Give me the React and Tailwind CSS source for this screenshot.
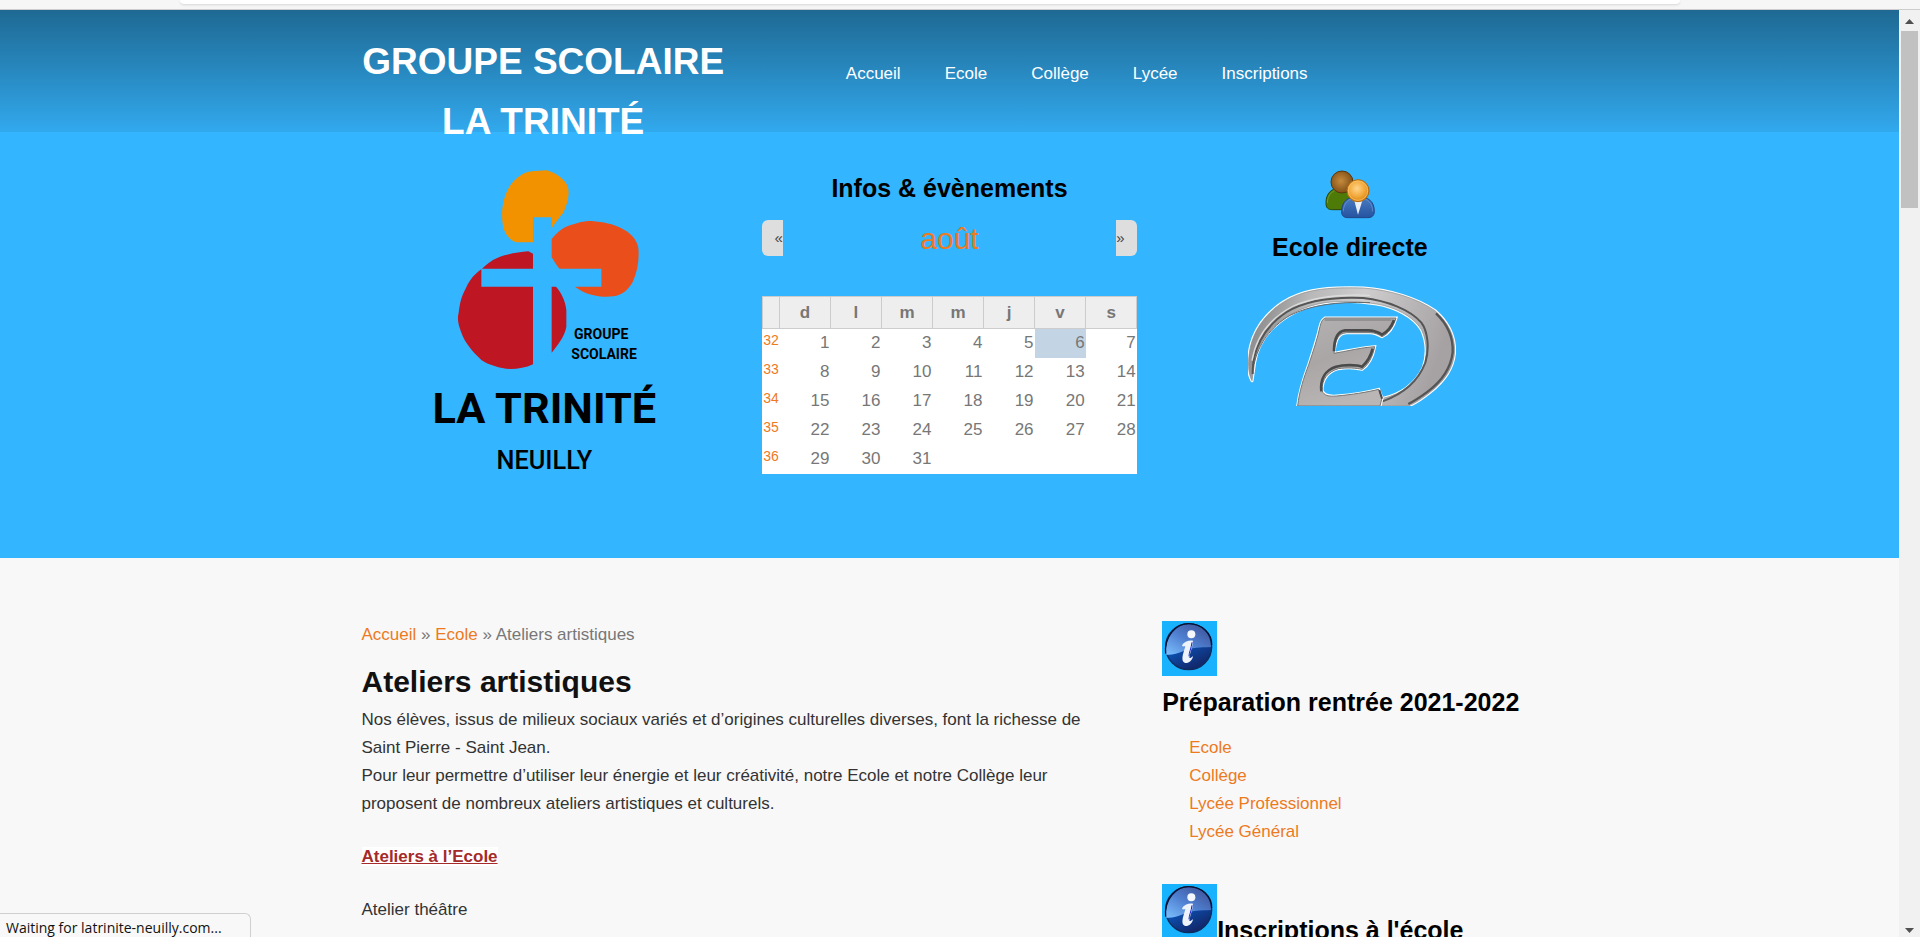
import React from "react";

const navItems = ["Accueil", "Ecole", "Collège", "Lycée", "Inscriptions"];
const weekDays = ["d", "l", "m", "m", "j", "v", "s"];
const weeks = [
  { number: 32, days: [1, 2, 3, 4, 5, 6, 7] },
  { number: 33, days: [8, 9, 10, 11, 12, 13, 14] },
  { number: 34, days: [15, 16, 17, 18, 19, 20, 21] },
  { number: 35, days: [22, 23, 24, 25, 26, 27, 28] },
  { number: 36, days: [29, 30, 31, null, null, null, null] },
];
const today = 6;
const prepLinks = ["Ecole", "Collège", "Lycée Professionnel", "Lycée Général"];

function SchoolLogo() {
  return (
    <svg width="225" height="301" viewBox="36 30 675 903" role="img" aria-label="Groupe scolaire La Trinité Neuilly">
      <path
        fill="#f39200"
        d="M290 247 C268 240 254 222 249 198 C242 160 247 112 272 74 C290 52 312 36 335 34 L380 31 C410 40 436 58 444 82 C450 110 440 135 430 158 C418 172 406 188 396 203 V172 H339 V247 Z"
      />
      <path
        fill="#ea4f1b"
        d="M395 237 C410 218 428 202 452 195 C475 188 490 183 515 183 C550 186 580 192 604 205 C630 218 650 236 655 264 C658 300 653 335 637 368 C622 392 606 404 580 409 C548 414 500 407 465 380 H544 V326 H418 C409 315 402 303 395 292 Z"
      />
      <path
        fill="#be1622"
        d="M186 326 C206 306 222 297 240 290 C262 282 295 277 325 274 L339 281 V326 Z M184 328 V380 H339 V613 C318 623 295 627 270 627 C240 625 205 615 184 600 C158 574 135 550 123 515 C115 495 111 475 116 458 C120 430 123 410 138 384 C150 358 164 342 184 328 Z M395 380 H408 C422 396 436 420 439 450 V500 C434 530 412 556 395 578 Z"
      />
      <g fill="#000" fontFamily="Roboto, 'Liberation Sans', sans-serif">
        <text x="462" y="538" fontSize="42" fontWeight="700">GROUPE</text>
        <text x="454" y="597" fontSize="42" fontWeight="700">SCOLAIRE</text>
        <text x="373" y="790" fontSize="130" fontWeight="700" textAnchor="middle">LA TRINITÉ</text>
        <text x="373" y="926" fontSize="76" fontWeight="500" textAnchor="middle">NEUILLY</text>
      </g>
    </svg>
  );
}

function PeopleIcon() {
  return (
    <svg width="50" height="50" viewBox="284 30 150 150" aria-hidden="true">
      <defs>
        <radialGradient id="headBrown" cx="45%" cy="45%" r="60%">
          <stop offset="0" stopColor="#c58a3e" />
          <stop offset="1" stopColor="#7a4a12" />
        </radialGradient>
        <radialGradient id="headGold" cx="45%" cy="40%" r="60%">
          <stop offset="0" stopColor="#ffd58a" />
          <stop offset="0.6" stopColor="#f2a93c" />
          <stop offset="1" stopColor="#d98612" />
        </radialGradient>
        <linearGradient id="suit" x1="0" y1="0" x2="0" y2="1">
          <stop offset="0" stopColor="#4a7cc2" />
          <stop offset="1" stopColor="#2553a0" />
        </linearGradient>
      </defs>
      <path d="M287 130 C286 100 305 82 335 82 C362 82 375 100 375 125 C375 142 366 149 350 149 H306 C292 149 287 142 287 130 Z" fill="#4e7a08" stroke="#2c4706" strokeWidth="3" />
      <path d="M291 129 C291 104 308 87 335 87" fill="none" stroke="#86a94c" strokeWidth="2" />
      <circle cx="335" cy="66" r="33" fill="url(#headBrown)" stroke="#5a3710" strokeWidth="3" />
      <path d="M334 155 C334 124 352 110 383 110 C414 110 432 124 432 155 C431 168 424 173 412 173 H354 C341 173 334 168 334 155 Z" fill="url(#suit)" stroke="#1f4686" strokeWidth="3" />
      <path d="M339 154 C339 130 356 116 370 115 M427 154 C427 130 410 116 396 115" fill="none" stroke="#6f9ad6" strokeWidth="2" />
      <path d="M372 122 L383 164 L396 122 Z" fill="#e8effa" />
      <circle cx="383" cy="92" r="33" fill="url(#headGold)" stroke="#b06a12" strokeWidth="3" />
      <circle cx="383" cy="92" r="29" fill="none" stroke="#ffc873" strokeWidth="2" />
    </svg>
  );
}

function EcoleDirecteLogo() {
  const swoosh =
    "M66 660 C54 640 52 600 62 555 C78 490 130 430 205 402 C260 382 320 380 400 382 C480 388 560 412 615 450 C655 485 674 525 674 570 C672 620 645 660 600 695 C575 715 555 728 535 736 H400 L455 714 C520 700 560 662 580 620 C592 588 592 545 575 508 C550 465 490 438 440 430 C390 422 330 420 285 426 C220 436 165 465 125 505 C95 535 78 575 74 605 Z";
  const letter =
    "M285 472 H498 C490 500 474 520 456 528 C446 522 436 516 420 516 H350 C325 518 316 535 312 578 C350 572 395 560 434 558 C428 590 414 614 396 626 C380 622 350 620 325 624 C292 634 276 655 276 690 C282 705 296 708 320 706 C365 702 410 695 446 686 L456 712 L450 736 H203 C208 690 222 650 236 612 C250 570 262 535 270 498 C273 484 277 476 285 472 Z";
  return (
    <svg width="208" height="120" viewBox="54 376 624 360" role="img" aria-label="Ecole directe">
      <defs>
        <linearGradient id="metal" x1="0" y1="0" x2="0.4" y2="1">
          <stop offset="0" stopColor="#b4b1b2" />
          <stop offset="0.5" stopColor="#aaa6a6" />
          <stop offset="1" stopColor="#bab6b6" />
        </linearGradient>
        <linearGradient id="ring" x1="0" y1="0" x2="1" y2="0.2">
          <stop offset="0" stopColor="#7a7a7a" />
          <stop offset="0.3" stopColor="#b9b8b9" />
          <stop offset="0.55" stopColor="#cfcdce" />
          <stop offset="1" stopColor="#a6a2a3" />
        </linearGradient>
      </defs>
      <path d={swoosh} fill="#fff" stroke="#fff" strokeWidth="9" strokeLinejoin="round" />
      <path d={swoosh} fill="url(#ring)" stroke="#8a8a8a" strokeWidth="2" />
      <path d="M68 640 C66 570 100 500 170 454 C230 418 310 408 400 412 C470 420 540 446 574 486 C592 510 600 560 586 606" fill="none" stroke="#555" strokeWidth="6" />
      <path d="M66 600 C78 530 120 472 190 436 C260 406 340 400 420 404" fill="none" stroke="#dcdcdc" strokeWidth="4" />
      <path d="M72 610 C86 550 120 500 180 464 C240 434 320 422 420 426" fill="none" stroke="#686868" strokeWidth="3" />
      <path d="M586 606 C565 660 520 700 458 722" fill="none" stroke="#5a5a5a" strokeWidth="6" />
      <path d="M618 458 C654 492 670 530 668 575 C662 625 634 662 594 692 C575 706 555 720 535 730" fill="none" stroke="#555" strokeWidth="7" />
      <path d={letter} fill="#fff" stroke="#fff" strokeWidth="9" />
      <path d={letter} fill="url(#metal)" stroke="#777" strokeWidth="3" />
      <path d="M492 478 C484 500 472 514 456 522 C444 514 430 509 415 509 H345 C322 512 312 535 312 572 M428 564 C422 588 410 606 396 618 C380 612 340 612 318 618 C286 628 270 655 274 692" fill="none" stroke="#4a4a4a" strokeWidth="8" />
      <path d="M448 688 L456 714" stroke="#4a4a4a" strokeWidth="6" />
      <path d="M284 478 H484" stroke="#777" strokeWidth="3" />
    </svg>
  );
}

function InfoIcon() {
  return (
    <svg width="55" height="55" viewBox="0 0 165 165" className="block shrink-0" aria-hidden="true">
      <defs>
        <linearGradient id="infoBase" x1="0" y1="0" x2="0.5" y2="1">
          <stop offset="0" stopColor="#2456a8" />
          <stop offset="0.5" stopColor="#0a55b8" />
          <stop offset="1" stopColor="#12296e" />
        </linearGradient>
        <linearGradient id="infoGloss" x1="0" y1="1" x2="0.9" y2="0">
          <stop offset="0" stopColor="#7cc0ff" />
          <stop offset="0.5" stopColor="#4f7fd0" />
          <stop offset="1" stopColor="#3d4f92" />
        </linearGradient>
      </defs>
      <rect width="165" height="165" fill="#19b2ff" />
      <circle cx="80" cy="77" r="69" fill="url(#infoBase)" stroke="#0d2c5e" strokeWidth="4" />
      <path d="M13 101 C6 55 38 11 80 10 C120 10 147 40 147 78 C115 80 88 78 65 90 C46 98 28 103 13 101 Z" fill="url(#infoGloss)" />
      <path d="M11 98 C6 48 40 8 80 8 C120 8 150 38 149 72" fill="none" stroke="#0a1030" strokeWidth="4" />
      <circle cx="88" cy="40" r="12" fill="#f4f7fc" />
      <path
        d="M60 73 C66 62 80 57 93 59 C92 78 84 94 82 110 C86 112 89 109 93 105 C92 118 80 127 70 126 C60 124 60 112 63 100 L70 76 C66 75 63 79 60 73 Z"
        fill="#eef2fa"
      />
      <path d="M90 64 C88 82 81 94 81 106" fill="none" stroke="#1320c8" strokeWidth="3" />
    </svg>
  );
}

function Calendar() {
  return (
    <div>
      <div className="mt-[17px] flex h-9 items-center justify-between">
        <button type="button" aria-label="Mois précédent" className="h-9 w-[21px] rounded-l-md bg-[#dedede] text-right text-[15px] text-[#444]">«</button>
        <span className="pt-0.5 text-[30px] leading-9 text-[#ed7a1e]">août</span>
        <button type="button" aria-label="Mois suivant" className="h-9 w-[21px] rounded-r-md bg-[#dedede] text-left text-[15px] text-[#444]">»</button>
      </div>
      <table className="mt-10 w-full table-fixed border-collapse bg-white text-[17px] text-[#777]">
        <thead>
          <tr className="h-8 bg-[#eee]">
            <th className="w-[17px] border border-[#ccc]" aria-label="Semaine" />
            {weekDays.map((day, i) => (
              <th key={i} className="border border-[#ccc] p-0 font-bold">{day}</th>
            ))}
          </tr>
        </thead>
        <tbody>
          {weeks.map((week) => (
            <tr key={week.number} className="h-[29px]">
              <td className="p-0 pl-px align-top text-[14px] leading-[22px]">
                <a href="#" className="text-[#ed7a1e]">{week.number}</a>
              </td>
              {week.days.map((day, i) => (
                <td key={i} className={day === today ? "bg-[#c3d5e4] p-0 pr-px text-right" : "p-0 pr-px text-right"}>{day}</td>
              ))}
            </tr>
          ))}
        </tbody>
      </table>
    </div>
  );
}

function Scrollbar() {
  return (
    <div className="flex w-[21px] shrink-0 flex-col items-center justify-between bg-[#f1f1f1]" aria-hidden="true">
      <div className="flex flex-col items-center">
        <svg width="9" height="21" viewBox="0 0 9 21"><path d="M0 14 L4.500 9 L9 14 Z" fill="#505050" /></svg>
        <div className="h-[177px] w-[17px] bg-[#c1c1c1]" />
      </div>
      <svg width="9" height="17" viewBox="0 0 9 17"><path d="M0 8 L4.500 13 L9 8 Z" fill="#505050" /></svg>
    </div>
  );
}

export default function App() {
  return (
    <div className="flex h-screen flex-col overflow-hidden bg-[#f8f8f8] font-['Liberation_Sans',Arial,sans-serif] text-[17px] leading-7 text-[#333]">
      <div className="h-[10px] shrink-0 border-b border-[#ccc] bg-[#f6f6f6] px-[180px]">
        <div className="mr-[60px] h-1 rounded-b-md bg-white shadow-sm" />
      </div>

      <div className="flex min-h-0 flex-1">
        <div className="min-w-0 flex-1 overflow-hidden">
          <header className="relative h-[122px] bg-linear-to-b from-[#1e6993] to-[#32a9ee]">
            <div className="mx-auto grid max-w-[1176px] grid-cols-3 gap-x-[25px]">
              <h1 className="mt-[22px] text-center text-[37px] font-bold leading-[60px] whitespace-nowrap text-white">
                <a href="#" className="mr-3 block">GROUPE SCOLAIRE<br />LA TRINITÉ</a>
              </h1>
              <nav className="col-span-2 mt-[50px] pl-[84px]">
                <ul className="flex gap-11 text-white">
                  {navItems.map((item) => (
                    <li key={item}><a href="#">{item}</a></li>
                  ))}
                </ul>
              </nav>
            </div>
          </header>

          <section className="bg-[#33b5ff]">
            <div className="mx-auto grid min-h-[426px] max-w-[1176px] grid-cols-3 gap-x-[25px] pt-[38px]">
              <div className="flex justify-center pr-[10px]"><SchoolLogo /></div>
              <div className="pt-[3px]">
                <h2 className="text-center text-[25px] font-bold leading-[30px] text-black">Infos &amp; évènements</h2>
                <Calendar />
              </div>
              <div className="flex flex-col items-center">
                <PeopleIcon />
                <h2 className="mt-3 mb-6 text-[25px] font-bold leading-[30px] text-black">Ecole directe</h2>
                <a href="#" className="pl-1"><EcoleDirecteLogo /></a>
              </div>
            </div>
          </section>

          <div className="mx-auto grid max-w-[1176px] grid-cols-3 gap-x-[25px] pt-[63px]">
            <main className="col-span-2 pr-6">
              <p className="text-[#777]">
                <a href="#" className="text-[#ed7a1e]">Accueil</a> » <a href="#" className="text-[#ed7a1e]">Ecole</a> » Ateliers artistiques
              </p>
              <h1 className="mt-[15px] mb-[6px] text-[30px] font-bold leading-9 text-[#111]">Ateliers artistiques</h1>
              <p>
                Nos élèves, issus de milieux sociaux variés et d’origines culturelles diverses, font la richesse de Saint Pierre - Saint Jean.
              </p>
              <p>
                Pour leur permettre d’utiliser leur énergie et leur créativité, notre Ecole et notre Collège leur proposent de nombreux ateliers artistiques et culturels.
              </p>
              <p className="mt-[25px]">
                <strong className="bg-white text-[#a52a2a] underline">Ateliers à l’Ecole</strong>
              </p>
              <p className="mt-[25px]">Atelier théâtre</p>
            </main>

            <aside>
              <InfoIcon />
              <h2 className="mt-[11px] text-[25px] font-bold leading-[30px] whitespace-nowrap text-black">Préparation rentrée 2021-2022</h2>
              <ul className="mt-[17px] pl-[27px]">
                {prepLinks.map((label) => (
                  <li key={label}><a href="#" className="text-[#ed7a1e]">{label}</a></li>
                ))}
              </ul>
              <h2 className="mt-[38px] flex items-end text-[25px] font-bold leading-[30px] whitespace-nowrap text-black">
                <InfoIcon />
                <span className="-mb-[6px]">Inscriptions à l'école</span>
              </h2>
            </aside>
          </div>
        </div>
        <Scrollbar />
      </div>

      <div className="fixed bottom-0 left-0 h-6 w-[251px] rounded-tr-md border-t border-r border-[#d0d0d0] bg-[#f8f8f8] pl-[6px] font-['Open_Sans',sans-serif] text-[14px] leading-[28px] text-[#111]">
        Waiting for latrinite-neuilly.com...
      </div>
    </div>
  );
}
